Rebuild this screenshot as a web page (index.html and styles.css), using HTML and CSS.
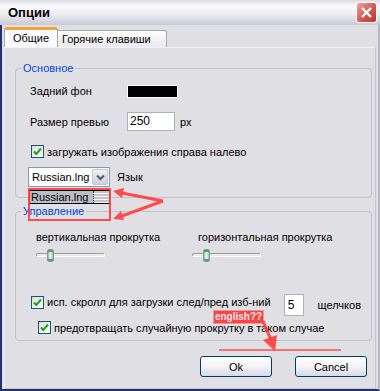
FILE: index.html
```html
<!DOCTYPE html>
<html lang="ru">
<head>
  <meta charset="UTF-8">
  <title>Опции</title>
  <link rel="stylesheet" href="styles.css">
</head>
<body>
  <div class="window">
    <header class="titlebar">
      <span class="title">Опции</span>
      <span class="close">
        <svg width="13" height="13" viewBox="0 0 13 13"><path d="M2 2 L11 11 M11 2 L2 11" stroke="#fff" stroke-width="2.4" fill="none"/></svg>
      </span>
    </header>

    <div class="frame">
      <div class="tabs">
        <div class="tab active">Общие</div>
        <div class="tab">Горячие клавиши</div>
      </div>

      <div class="panel">
        <fieldset class="group main">
          <legend>Основное</legend>
          <div class="row r-bg">
            <span class="lbl">Задний фон</span>
            <span class="swatch"></span>
          </div>
          <div class="row r-size">
            <span class="lbl">Размер превью</span>
            <span class="field size">250</span>
            <span class="unit">px</span>
          </div>
          <div class="row r-rtl">
            <span class="check"><svg width="11" height="11" viewBox="0 0 11 11"><path d="M2 5.5 L4.3 8 L9 2.5" stroke="#21a121" stroke-width="2" fill="none"/></svg></span>
            <span>загружать изображения справа налево</span>
          </div>
          <div class="row r-lang">
            <span class="combo">
              <span class="combo-text">Russian.lng</span>
              <span class="combo-btn"><svg width="9" height="7" viewBox="0 0 9 7"><path d="M1 1.5 L4.5 5 L8 1.5" stroke="#4d5a78" stroke-width="2" fill="none"/></svg></span>
            </span>
            <span class="combo-lbl">Язык</span>
          </div>
        </fieldset>

        <fieldset class="group control">
          <legend>Управление</legend>
          <div class="scrolls">
            <div class="scroll-col">
              <div class="scroll-lbl">вертикальная прокрутка</div>
              <div class="slider"><span class="thumb"></span></div>
            </div>
            <div class="scroll-col second">
              <div class="scroll-lbl">горизонтальная прокрутка</div>
              <div class="slider"><span class="thumb"></span></div>
            </div>
          </div>
          <div class="row r-wheel">
            <span class="check"><svg width="11" height="11" viewBox="0 0 11 11"><path d="M2 5.5 L4.3 8 L9 2.5" stroke="#21a121" stroke-width="2" fill="none"/></svg></span>
            <span class="wheel-lbl">исп. скролл для загрузки след/пред изб-ний</span>
            <span class="field clicks-num">5</span>
            <span class="clicks">щелчков</span>
          </div>
          <div class="row r-prevent">
            <span class="check"><svg width="11" height="11" viewBox="0 0 11 11"><path d="M2 5.5 L4.3 8 L9 2.5" stroke="#21a121" stroke-width="2" fill="none"/></svg></span>
            <span>предотвращать случайную прокрутку в таком случае</span>
          </div>
        </fieldset>

        <div class="actions">
          <button class="btn">Ok</button>
          <button class="btn">Cancel</button>
        </div>
      </div>
    </div>

    <!-- annotations drawn on top of the screenshot -->
    <div class="glitch">
      <span class="glitch-text">Russian.lng</span>
      <span class="glitch-btn"></span>
    </div>
    <span class="note">english??</span>
    <svg class="marks" width="380" height="391" viewBox="0 0 380 391">
      <g stroke="#ff3c3c" fill="none" stroke-opacity="0.9">
        <rect x="29" y="189" width="81" height="31" stroke-width="2"/>
        <path d="M163 201 L122 193 M163 201 L122 216" stroke-width="3"/>
        <path d="M263 321 L271 340" stroke-width="3"/>
        <path d="M219 350 L341 350" stroke-width="1.5"/>
      </g>
      <g fill="#ff3c3c" fill-opacity="0.9">
        <path d="M113 191 L124 188 L122 198 Z"/>
        <path d="M113 219 L121 211 L124 220 Z"/>
        <path d="M275 351 L263 340 L277 335 Z"/>
      </g>
    </svg>
  </div>
</body>
</html>
```

FILE: styles.css
```css
/* Page */
body {
  margin: 0;
  font-family: "Liberation Sans", Arial, sans-serif;
  font-size: 11px;
  color: #000;
  background: #e0dfe3;
}

.window {
  position: relative;
  width: 380px;
  height: 391px;
  display: flex;
  flex-direction: column;
  overflow: hidden;
}

/* Title bar */
.titlebar {
  height: 25px;
  flex: none;
  box-sizing: border-box;
  padding: 0 3px 0 8px;
  display: flex;
  align-items: center;
  justify-content: space-between;
  background: linear-gradient(#dcdce4 0%, #fbfbfd 25%, #eeeef3 55%, #c9c9d7 100%);
}
.title {
  font-size: 13px;
  font-weight: bold;
}
.close {
  width: 21px;
  height: 21px;
  box-sizing: border-box;
  border: 1px solid #fff;
  border-radius: 3px;
  background: linear-gradient(135deg, #eea29a, #d05a50 55%, #b8362e);
  display: flex;
  align-items: center;
  justify-content: center;
}

/* Window body */
.frame {
  flex: 1;
  display: flex;
  flex-direction: column;
  padding: 2px 2px 0 2px;
  border-left: 2px solid #22326f;
  border-right: 2px solid #b6b6c2;
  border-bottom: 2px solid #22326f;
}

.tabs {
  display: flex;
  align-items: flex-end;
  height: 20px;
  flex: none;
}
.tab {
  height: 17px;
  box-sizing: border-box;
  width: 109px;
  padding-left: 4px;
  line-height: 16px;
  border: 1px solid #a3a9b4;
  border-left: none;
  border-bottom: none;
  border-radius: 0 3px 0 0;
  background: linear-gradient(#fefefe, #e9e9ee);
}
.tab.active {
  width: 54px;
  height: 20px;
  padding: 0;
  text-align: center;
  line-height: 17px;
  border-left: 1px solid #a3a9b4;
  border-top: 3px solid #f2a33a;
  border-radius: 3px 3px 0 0;
  background: #fcfcfe;
}

.panel {
  flex: 1;
  display: flex;
  flex-direction: column;
  border: 1px solid #c6c6d0;
  border-top-color: #f2f2f5;
  border-left-color: #f2f2f5;
}

/* Group boxes */
.group {
  margin: 13px 3px 0 10px;
  padding: 6px 10px 10px 14px;
  border: 1px solid #c2c2ca;
  border-radius: 4px;
  min-width: 0;
}
.group legend {
  margin-left: -9px;
  padding: 0 2px;
  line-height: 14px;
  color: #0046d5;
}
.group.control {
  margin-top: 6px;
  padding: 12px 10px 6px 14px;
}

.row {
  display: flex;
  align-items: center;
  white-space: nowrap;
}
.lbl {
  width: 97px;
}
.r-bg {
  height: 20px;
}
.swatch {
  width: 51px;
  height: 13px;
  box-sizing: border-box;
  border: 1px solid #fdfdfd;
  background: #000;
}
.r-size {
  height: 21px;
  margin-top: 10px;
}
.field {
  box-sizing: border-box;
  background: #fff;
  border: 1px solid #a9b1ba;
}
.field.size {
  width: 48px;
  height: 19px;
  padding-left: 2px;
  line-height: 17px;
  font-size: 12px;
}
.unit {
  margin-left: 5px;
}
.r-rtl {
  height: 19px;
  margin-top: 10px;
}
.check {
  width: 13px;
  height: 13px;
  flex: none;
  box-sizing: border-box;
  border: 1px solid #1c5180;
  background: linear-gradient(135deg, #dcdcd7, #fff);
  margin: 0 3px 0 1px;
  display: flex;
  align-items: center;
  justify-content: center;
}

.r-lang {
  height: 20px;
  margin-top: 6px;
  margin-left: -2px;
}
.combo {
  width: 82px;
  height: 20px;
  box-sizing: border-box;
  border: 1px solid #7f9db9;
  background: #fff;
  padding: 1px;
  display: flex;
  align-items: center;
  justify-content: space-between;
}
.combo-text {
  padding-left: 2px;
}
.combo-btn {
  width: 16px;
  height: 16px;
  box-sizing: border-box;
  border: 1px solid #c3c6d2;
  border-radius: 2px;
  background: linear-gradient(#f0f0f4, #cfd0da);
  display: flex;
  align-items: center;
  justify-content: center;
}
.combo-lbl {
  margin-left: 7px;
}

/* Sliders */
.scrolls {
  display: flex;
  padding-left: 6px;
}
.scroll-col {
  width: 156px;
}
.scroll-col.second .scroll-lbl {
  margin-left: 6px;
}
.scroll-lbl {
  height: 14px;
  line-height: 14px;
  white-space: nowrap;
}
.slider {
  position: relative;
  width: 69px;
  height: 13px;
  margin-top: 5px;
}
.slider::before {
  content: "";
  position: absolute;
  left: 0;
  right: 0;
  top: 4px;
  height: 4px;
  box-sizing: border-box;
  border: 1px solid;
  border-color: #9d9d9d #fff #fff #9d9d9d;
  border-radius: 2px;
  background: #ecebe6;
}
.thumb {
  position: absolute;
  left: 11px;
  top: 0;
  width: 7px;
  height: 13px;
  box-sizing: border-box;
  border: 1px solid #8a95a8;
  border-radius: 2px;
  background: linear-gradient(90deg, #aab2c2, #f2f4f8 50%, #aab2c2);
  box-shadow: inset 0 2px #3cb43c, inset 0 -2px #3cb43c;
}

.r-wheel {
  height: 22px;
  margin-top: 32px;
  align-items: flex-start;
}
.r-wheel .check {
  margin-top: 2px;
}
.wheel-lbl {
  width: 242px;
  margin-top: 2px;
  line-height: 13px;
}
.field.clicks-num {
  width: 20px;
  height: 22px;
  padding-left: 3px;
  line-height: 20px;
  font-size: 12px;
}
.clicks {
  margin-left: 14px;
  line-height: 22px;
}
.r-prevent {
  height: 13px;
  margin-top: 5px;
  margin-left: 7px;
}

/* Buttons */
.actions {
  display: flex;
  justify-content: flex-end;
  gap: 23px;
  margin-top: 15px;
  padding-right: 8px;
}
.btn {
  width: 72px;
  height: 21px;
  padding: 0;
  font: inherit;
  color: #000;
  border: 1px solid #003c74;
  border-radius: 3px;
  background: linear-gradient(#fff, #f3f3f6 50%, #d8d8e2);
}

/* Red annotations over the screenshot */
.glitch {
  position: absolute;
  left: 29px;
  top: 190px;
  width: 81px;
  height: 14px;
  box-sizing: border-box;
  border: 1px solid #000;
  background: #bdbdc6;
  display: flex;
}
.glitch-text {
  width: 62px;
  line-height: 12px;
  padding-left: 1px;
}
.glitch-btn {
  flex: 1;
  border-left: 1px dotted #333;
  background: repeating-linear-gradient(#c4c4cc 0 2px, #f6f6f8 2px 3px);
}
.note {
  position: absolute;
  left: 214px;
  top: 311px;
  width: 49px;
  height: 12px;
  background: #f04848;
  box-shadow: 0 0 0 1px #ff8e8e;
  color: #ffe2e2;
  font-size: 10px;
  font-weight: bold;
  line-height: 12px;
  text-align: center;
}
.marks {
  position: absolute;
  left: 0;
  top: 0;
  pointer-events: none;
}
```
